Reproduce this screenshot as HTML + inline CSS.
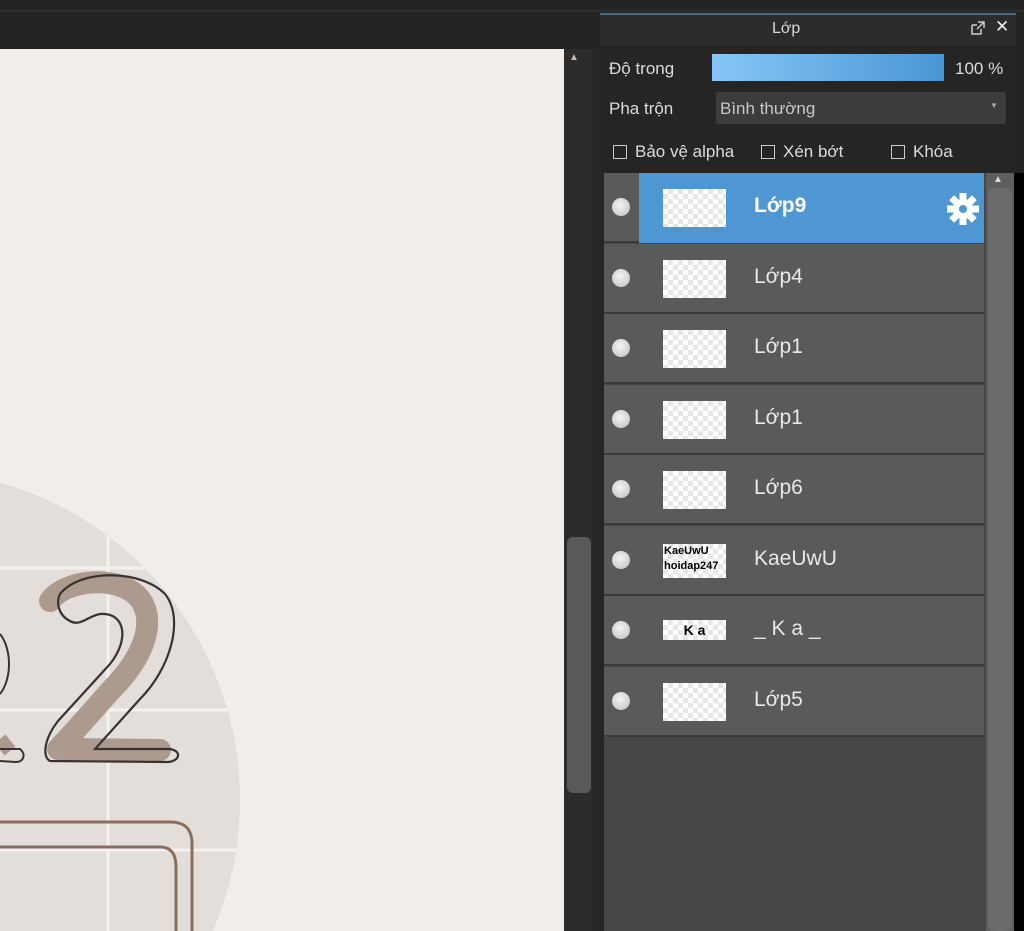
<!DOCTYPE html>
<html><head><meta charset="utf-8"><style>
*{margin:0;padding:0;box-sizing:border-box}
html,body{width:1024px;height:931px;overflow:hidden}
body{background:#232323;position:relative;font-family:"Liberation Sans","DejaVu Sans",sans-serif}
.abs{position:absolute}
.row{position:absolute;left:604px;width:380px;height:70px;background:#5a5a5a;border-bottom:2px solid #3a3a3a}
.dot{position:absolute;left:8px;top:25px;width:18px;height:18px;border-radius:50%;background:radial-gradient(circle at 45% 40%,#f4f4f4,#bdbdbd)}
.th{position:absolute;left:59px;top:16px;width:63px;height:38px;background-color:#fff;background-image:linear-gradient(45deg,#e6e6e6 25%,transparent 25%,transparent 75%,#e6e6e6 75%),linear-gradient(45deg,#e6e6e6 25%,transparent 25%,transparent 75%,#e6e6e6 75%);background-size:10px 10px;background-position:0 0,5px 5px}
.nm{position:absolute;left:150px;top:21px;font-size:21px;color:#e8e8e8}
.lbl{color:#dcdcdc;font-size:17px;position:absolute}
.cb{display:inline-block;width:14px;height:14px;border:1.5px solid #ccc;vertical-align:-2px;margin-right:8px}
</style></head><body>
<div class="abs" style="left:0;top:10px;width:1024px;height:2px;background:#2e2e2e"></div>
<div class="abs" style="left:0;top:49px;width:564px;height:882px;background:#f0edea;overflow:hidden">
<svg width="564" height="882" style="position:absolute;left:0;top:0">
<defs><clipPath id="c"><circle cx="-90" cy="751" r="330"/></clipPath></defs>
<circle cx="-90" cy="751" r="330" fill="#e4deda"/>
<g stroke="#f4f1ee" stroke-width="3" clip-path="url(#c)">
<line x1="108" y1="400" x2="108" y2="882"/>
<line x1="0" y1="519" x2="300" y2="519"/>
<line x1="0" y1="661" x2="300" y2="661"/>
<line x1="0" y1="801" x2="300" y2="801"/>
</g>
<path d="M50 552 C65 530 120 525 140 550 C158 575 140 612 112 640 L72 685 L58 700 L160 701" fill="none" stroke="#ad9a8e" stroke-width="22" stroke-linecap="round" stroke-linejoin="round"/>
<path d="M0 690 L10 702" fill="none" stroke="#ad9a8e" stroke-width="14"/>
<path d="M60 545 C80 520 140 520 165 545 C185 570 170 620 140 650 L95 700 L170 700 C182 702 180 712 168 713 L50 712 C42 708 44 690 58 672 L110 615 C130 590 125 563 100 565 C88 567 80 578 70 572 C58 566 56 553 60 545 Z" fill="none" stroke="#3a3230" stroke-width="2.2"/>
<path d="M0 700 L20 700 C26 705 24 713 16 713 L0 712" fill="none" stroke="#3a3230" stroke-width="2"/>
<path d="M0 585 C12 600 12 630 0 645" fill="none" stroke="#3a3230" stroke-width="2"/>
<path d="M0 773 L170 773 C185 773 192 780 192 795 L192 882" fill="none" stroke="#8a6e5c" stroke-width="3"/>
<path d="M0 798 L160 798 C172 798 176 806 176 818 L176 882" fill="none" stroke="#8a6e5c" stroke-width="3"/>
</svg>
</div>
<div class="abs" style="left:564px;top:49px;width:28px;height:882px;background:#2c2c2c"></div>
<div class="abs" style="left:569px;top:52px;font-size:10px;color:#bbb">▲</div>
<div class="abs" style="left:567px;top:537px;width:24px;height:256px;background:#595959;border-radius:6px"></div>
<div class="abs" style="left:592px;top:49px;width:12px;height:882px;background:#262626"></div>
<div class="abs" style="left:600px;top:13px;width:416px;height:2px;background:#4a6a88"></div>
<div class="abs" style="left:600px;top:15px;width:416px;height:30px;background:#2c2c2c"></div>
<div class="abs" style="left:772px;top:20px;color:#d8d8d8;font-size:16px">Lớp</div>
<svg class="abs" style="left:971px;top:21px" width="14" height="14"><path d="M1 4 H6 M1 4 V13 H10 V8" fill="none" stroke="#ccc" stroke-width="1.5"/><path d="M7 1 H13 V7 M13 1 L6 8" fill="none" stroke="#ccc" stroke-width="1.5"/></svg>
<div class="abs" style="left:995px;top:17px;color:#eee;font-size:17px;font-weight:bold">✕</div>
<div class="abs" style="left:600px;top:45px;width:416px;height:128px;background:#252525"></div>
<div class="lbl" style="left:609px;top:59px">Độ trong</div>
<div class="abs" style="left:712px;top:54px;width:232px;height:27px;background:linear-gradient(90deg,#86c7f7,#4a96d4)"></div>
<div class="lbl" style="left:955px;top:59px">100 %</div>
<div class="lbl" style="left:609px;top:99px">Pha trộn</div>
<div class="abs" style="left:716px;top:92px;width:290px;height:32px;background:#3c3c3c;border-radius:3px"></div>
<div class="lbl" style="left:720px;top:99px;color:#c8c8c8">Bình thường</div>
<div class="abs" style="left:990px;top:101px;font-size:8px;color:#aaa">▼</div>
<div class="lbl" style="left:613px;top:142px"><span class="cb"></span>Bảo vệ alpha</div>
<div class="lbl" style="left:761px;top:142px"><span class="cb"></span>Xén bớt</div>
<div class="lbl" style="left:891px;top:142px"><span class="cb"></span>Khóa</div>
<div class="abs" style="left:600px;top:173px;width:4px;height:758px;background:#252525"></div>
<div class="abs" style="left:604px;top:173px;width:382px;height:758px;background:#484644"></div>
<div class="row" style="top:173px"><div class="abs" style="left:35px;top:0;width:345px;height:70px;background:#4f97d2"></div><div class="dot"></div><div class="th"></div><div class="nm" style="font-weight:bold;color:#fff">Lớp9</div>
<svg class="abs" style="left:342px;top:19px" width="34" height="34" viewBox="-17 -17 34 34"><g fill="#fff"><circle r="10"/><g id="t"><rect x="-3.5" y="-16" width="7" height="8"/></g><use href="#t" transform="rotate(45)"/><use href="#t" transform="rotate(90)"/><use href="#t" transform="rotate(135)"/><use href="#t" transform="rotate(180)"/><use href="#t" transform="rotate(225)"/><use href="#t" transform="rotate(270)"/><use href="#t" transform="rotate(315)"/></g><circle r="4" fill="#4f97d2"/></svg></div>
<div class="row" style="top:244px"><div class="dot"></div><div class="th"></div><div class="nm">Lớp4</div></div>
<div class="row" style="top:314px"><div class="dot"></div><div class="th"></div><div class="nm">Lớp1</div></div>
<div class="row" style="top:385px"><div class="dot"></div><div class="th"></div><div class="nm">Lớp1</div></div>
<div class="row" style="top:455px"><div class="dot"></div><div class="th"></div><div class="nm">Lớp6</div></div>
<div class="row" style="top:526px"><div class="dot"></div><div class="th" style="top:18px;height:34px;font-size:11px;line-height:15px;color:#000;font-weight:bold;padding-left:1px;overflow:hidden">KaeUwU<br>hoidap247</div><div class="nm">KaeUwU</div></div>
<div class="row" style="top:596px"><div class="dot"></div><div class="th" style="top:24px;height:20px;font-size:14px;line-height:20px;color:#000;font-weight:bold;text-align:center">K a</div><div class="nm">_ K a _</div></div>
<div class="row" style="top:667px"><div class="dot"></div><div class="th"></div><div class="nm">Lớp5</div></div>
<div class="abs" style="left:986px;top:173px;width:28px;height:758px;background:#5e5e5e"></div>
<div class="abs" style="left:993px;top:174px;font-size:10px;color:#ddd">▲</div>
<div class="abs" style="left:988px;top:188px;width:24px;height:743px;background:#6a6a6a;border-radius:6px"></div>
<div class="abs" style="left:1014px;top:173px;width:10px;height:758px;background:#000"></div>
</body></html>
